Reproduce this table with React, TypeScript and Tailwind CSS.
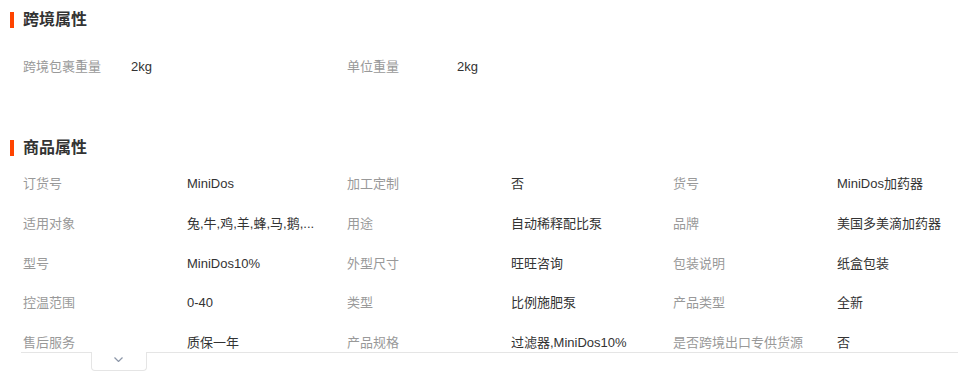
import React from "react";

const font = { fontFamily: '"Liberation Sans", "Noto Sans CJK SC", sans-serif' };

function Header({ title }: { title: string }) {
  return (
    <div className="flex items-center h-[16px]">
      <div className="ml-[10px] w-[4px] h-[16px] bg-[#ff4400]" />
      <div className="ml-[9px] text-[16px] leading-[16px] font-bold text-[#333333]">{title}</div>
    </div>
  );
}

const rows: [string, string][][] = [
  [["订货号", "MiniDos"], ["加工定制", "否"], ["货号", "MiniDos加药器"]],
  [["适用对象", "兔,牛,鸡,羊,蜂,马,鹅,..."], ["用途", "自动稀释配比泵"], ["品牌", "美国多美滴加药器"]],
  [["型号", "MiniDos10%"], ["外型尺寸", "旺旺咨询"], ["包装说明", "纸盒包装"]],
  [["控温范围", "0-40"], ["类型", "比例施肥泵"], ["产品类型", "全新"]],
  [["售后服务", "质保一年"], ["产品规格", "过滤器,MiniDos10%"], ["是否跨境出口专供货源", "否"]],
];

export default function App() {
  return (
    <div className="w-[958px] h-[373px] overflow-hidden bg-white" style={font}>
      <div className="pt-[12px]">
        <Header title="跨境属性" />
        <div className="mt-[19px] flex h-[40px] items-center text-[13px] pl-[23px]">
          <div className="w-[108px] text-[#999999]">跨境包裹重量</div>
          <div className="w-[216px] text-[#333333]">2kg</div>
          <div className="w-[110px] text-[#999999]">单位重量</div>
          <div className="text-[#333333]">2kg</div>
        </div>
      </div>
      <div className="mt-[53px]">
        <Header title="商品属性" />
        <div className="mt-[8px] h-[188px] overflow-hidden pl-[23px]">
          {rows.map((r, i) => (
            <div key={i} className="flex h-[39.75px] items-center text-[13px]">
              {r.map(([k, v], j) => (
                <div key={j} className={`flex items-center ${j === 0 ? "w-[324px]" : j === 1 ? "w-[326px]" : "flex-1"}`}>
                  <div className="w-[164px] shrink-0 text-[#999999] whitespace-nowrap">{k}</div>
                  <div className="whitespace-nowrap text-[#333333]">{v}</div>
                </div>
              ))}
            </div>
          ))}
        </div>
        <div className="flex ml-[21px]">
          <div className="w-[70px] border-t border-[#e5e5e5]" />
          <div className="w-[56px] h-[19px] border-x border-b border-[#e5e5e5] rounded-b-[4px] pl-[22px] pt-[5px]">
            <svg width="9" height="5" viewBox="0 0 9 5" fill="none">
              <path d="M0.5 0.5 L4.5 4.5 L8.5 0.5" stroke="#8c96a8" strokeWidth="1.2" />
            </svg>
          </div>
          <div className="flex-1 border-t border-[#e5e5e5]" />
        </div>
      </div>
    </div>
  );
}
